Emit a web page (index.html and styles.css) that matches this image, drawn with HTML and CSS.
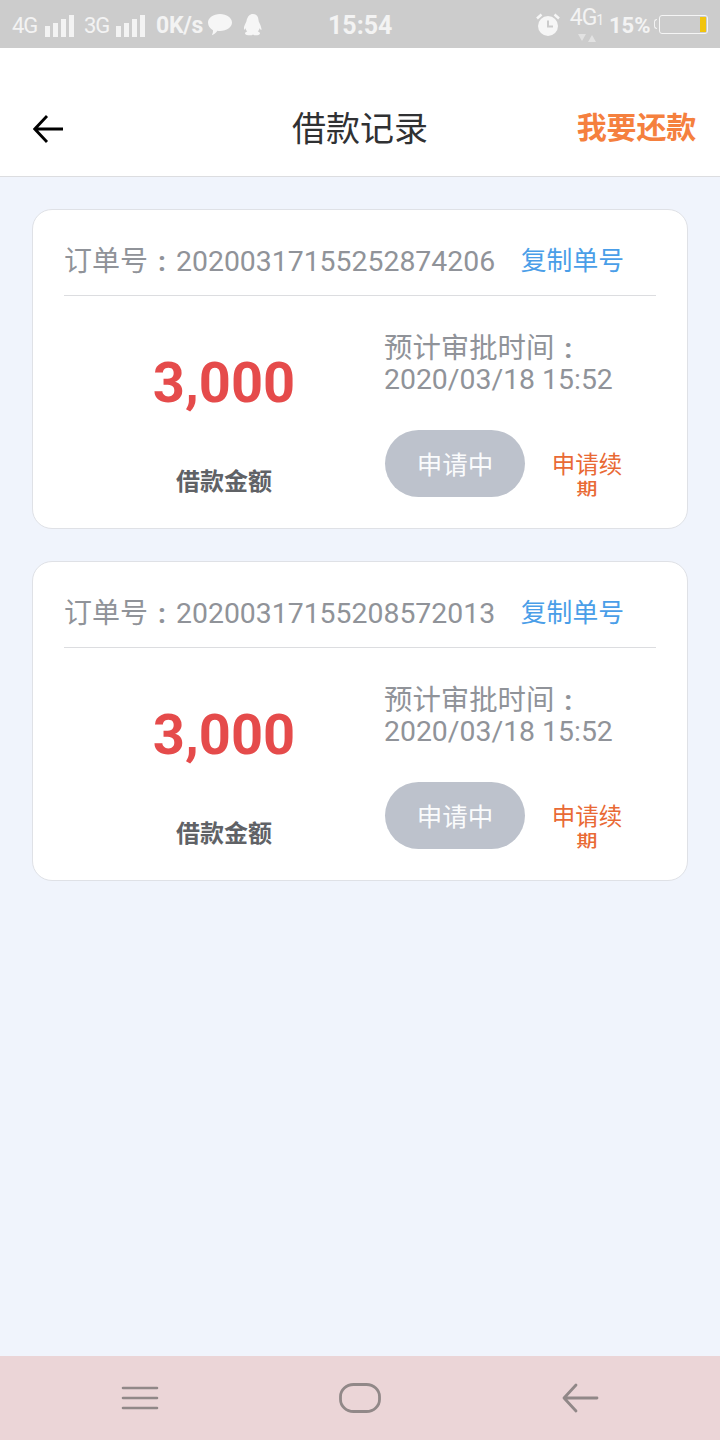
FILE: index.html
```html
<!DOCTYPE html>
<html lang="zh">
<head>
<meta charset="utf-8">
<title>借款记录</title>
<link rel="stylesheet" href="styles.css">
</head>
<body>
<div class="page">
  <div class="status">
    <div class="status-left">
      <span class="net">4G</span>
      <svg class="bars" width="29" height="22" viewBox="0 0 29 22"><path d="M0 11h5v11H0zM8 8h5v14H8zM16 4h5v18h-5zM24 0h5v22h-5z" fill="#f3f3f3"/></svg>
      <span class="net net-b">3G</span>
      <svg class="bars" width="29" height="22" viewBox="0 0 29 22"><path d="M0 11h5v11H0zM8 8h5v14H8zM16 4h5v18h-5zM24 0h5v22h-5z" fill="#f3f3f3"/></svg>
      <span class="speed">0K/s</span>
      <svg class="bubble" width="24" height="22" viewBox="0 0 24 22"><path d="M12 0c6.600 0 12 3.700 12 8.500S18.600 17 12 17c-.9 0-1.800-.1-2.600-.2C8 18.800 6 20.300 3.800 21.300c.9-1.700 1.300-3.300 1.200-5.100C2 14.700 0 11.800 0 8.500 0 3.700 5.400 0 12 0z" fill="#f6f6f6"/></svg>
      <svg class="qq" width="18" height="22" viewBox="0 0 18 22"><path d="M9 0c3.500 0 5.300 2.600 5.500 6 0 1 .3 1.700.8 2.700.9 1.700 1.800 3.700 2.200 6.300.1 1-.5 1.300-1 .6l-1-1.400c-.2 1.300-.8 2.400-1.700 3.300 1.100.4 2.200 1 2.200 2 0 1.300-2.400 1.800-4.300 1.800-1.100 0-2-.3-2.700-.9-.7.6-1.600.9-2.700.9C3.400 21.300 1 20.800 1 19.500c0-1 1.100-1.600 2.200-2C2.300 16.600 1.700 15.500 1.500 14.200l-1 1.400c-.5.700-1.100.4-1-.6C0 12.400.9 10.400 1.800 8.700c.5-1 .9-1.700.9-2.700C3.700 2.600 5.500 0 9 0z" fill="#f6f6f6"/></svg>
      <span class="clock">15:54</span>
    </div>
    <div class="status-right">
      <svg class="alarm" width="24" height="24" viewBox="0 0 24 24"><circle cx="12" cy="13" r="10" fill="#f6f6f6"/><path d="M12 7.500V13.500H17" fill="none" stroke="#cccccc" stroke-width="2"/><path d="M1 5.500 5.500 1.500M23 5.500 18.500 1.500" stroke="#f6f6f6" stroke-width="2.500" fill="none"/></svg>
      <div class="net-stack">
        <span class="net-main">4G<small class="net-sub">1</small></span>
        <svg class="arrows" width="18" height="8" viewBox="0 0 18 8"><path d="M0 0h8L4 7zM10 8l4-7 4 7z" fill="#e2e2e2"/></svg>
      </div>
      <span class="pct">15%</span>
      <span class="batt-cap"></span>
      <div class="battery"><span class="batt-level"></span></div>
    </div>
  </div>

  <header class="topbar">
    <svg class="back" width="30" height="30" viewBox="0 0 30 30"><path d="M14 2 1.800 15 14 28M2 15h28" fill="none" stroke="#000" stroke-width="2.800"/></svg>
    <h1 class="title">借款记录</h1>
    <a class="repay">我要还款</a>
  </header>

  <main class="list">
    <section class="card">
      <div class="card-head">
        <span class="order"><span class="label">订单号<span class="colon">:</span></span>20200317155252874206</span>
        <a class="copy">复制单号</a>
      </div>
      <div class="card-body">
        <div class="amount-col">
          <div class="amount">3,000</div>
          <div class="amount-label">借款金额</div>
        </div>
        <div class="info-col">
          <div class="eta">预计审批时间<span class="colon">:</span><br>2020/03/18 15:52</div>
          <div class="actions">
            <span class="pill">申请中</span>
            <a class="renew"><span class="renew-a">申请续</span><span class="renew-b">期</span></a>
          </div>
        </div>
      </div>
    </section>
    <section class="card">
      <div class="card-head">
        <span class="order"><span class="label">订单号<span class="colon">:</span></span>20200317155208572013</span>
        <a class="copy">复制单号</a>
      </div>
      <div class="card-body">
        <div class="amount-col">
          <div class="amount">3,000</div>
          <div class="amount-label">借款金额</div>
        </div>
        <div class="info-col">
          <div class="eta">预计审批时间<span class="colon">:</span><br>2020/03/18 15:52</div>
          <div class="actions">
            <span class="pill">申请中</span>
            <a class="renew"><span class="renew-a">申请续</span><span class="renew-b">期</span></a>
          </div>
        </div>
      </div>
    </section>
  </main>

  <nav class="navbar">
    <svg width="40" height="30" viewBox="0 0 40 30"><path d="M3 5h34M3 15h34M3 25h34" stroke="#918888" stroke-width="2.600" stroke-linecap="round" fill="none"/></svg>
    <svg width="44" height="32" viewBox="0 0 44 32"><rect x="2.500" y="2.500" width="39" height="27" rx="13" ry="12" fill="none" stroke="#918888" stroke-width="2.800"/></svg>
    <svg width="40" height="32" viewBox="0 0 40 32"><path d="M16 3 4 16l12 13M4 16h33" stroke="#918888" stroke-width="2.800" stroke-linecap="round" stroke-linejoin="round" fill="none"/></svg>
  </nav>
</div>
</body>
</html>
```
FILE: styles.css
```css
* { box-sizing: border-box; }
html, body { margin: 0; padding: 0; }
body {
  font-family: Roboto, "Noto Sans CJK SC", sans-serif;
  background: #f0f4fc;
}
.page {
  width: 720px;
  height: 1440px;
  display: flex;
  flex-direction: column;
  overflow: hidden;
}

/* status bar */
.status {
  height: 48px;
  background: #cccccc;
  color: #f3f3f3;
  display: flex;
  align-items: center;
  justify-content: space-between;
  padding: 2px 12px 0;
  flex: none;
}
.status-left, .status-right { display: flex; align-items: center; }
.net { font-size: 22px; letter-spacing: -1px; width: 33px; font-weight: 400; }
.net-b { margin-left: 10px; width: 32px; }
.bars { margin-top: 1px; }
.speed { font-size: 23px; font-weight: 700; margin-left: 11px; width: 52px; letter-spacing: -.3px; }
.qq { margin-left: 12px; }
.clock { font-size: 25px; font-weight: 700; margin-left: 66px; color: #f3f3f3; }
.alarm { margin-right: 10px; margin-left: 2px; }
.net-stack { display: flex; flex-direction: column; align-items: center; width: 34px; height: 38px; margin-right: 5px; margin-top: -3px; }
.net-main { font-size: 23px; line-height: 26px; font-weight: 400; letter-spacing: -1px; white-space: nowrap; }
.net-sub { font-size: 14px; letter-spacing: 0; }
.arrows { margin-top: 1px; }
.pct { font-size: 22px; font-weight: 700; width: 44px; }
.batt-cap { width: 3px; height: 10px; border: 1px solid #f3f3f3; border-right: 0; border-radius: 3px 0 0 3px; margin-left: 1px; margin-top: -2px; }
.battery {
  width: 49px;
  height: 19px;
  margin-left: 2px;
  margin-top: -2px;
  border: 1px solid #f5f5f5;
  border-radius: 3px;
  display: flex;
  justify-content: flex-end;
  padding: 1px;
}
.batt-level { width: 6px; background: #f2c40e; }

/* title bar */
.topbar {
  height: 129px;
  flex: none;
  background: #fff;
  border-bottom: 1px solid #dcdde0;
  display: flex;
  align-items: center;
  justify-content: space-between;
  position: relative;
  padding: 32px 24px 0 33px;
}
.title {
  margin: 0;
  font-size: 34px;
  font-weight: 400;
  color: #303133;
  line-height: 48px;
  position: absolute;
  left: 0;
  right: 0;
  top: 57px;
  text-align: center;
}
.back { display: block; margin-top: 1px; }
.repay { font-size: 30px; font-weight: 700; color: #f5803e; line-height: 44px; letter-spacing: -.2px; }

/* cards */
.list {
  flex: 1;
  padding: 32px 32px 0;
  display: flex;
  flex-direction: column;
  gap: 32px;
}
.card {
  height: 320px;
  background: #fff;
  border: 1px solid #dfe1e6;
  border-radius: 20px;
  padding: 0 31px;
  flex: none;
}
.card-head {
  height: 86px;
  display: flex;
  align-items: center;
  justify-content: space-between;
  border-bottom: 1px solid #dcdde0;
  padding: 32px 32px 16px 0;
}
.order { font-size: 28.400px; color: #909399; line-height: 40px; white-space: nowrap; margin-top: 2px; }
.label { font-size: 28px; }
.colon {
  display: inline-block;
  width: 28px;
  text-align: center;
  line-height: 1;
  font-weight: 700;
}
.copy { font-size: 25.800px; color: #4a9ee8; line-height: 38px; white-space: nowrap; }
.card-body { display: flex; }
.amount-col {
  width: 320px;
  display: flex;
  flex-direction: column;
  align-items: center;
  flex: none;
}
.amount {
  font-size: 56px;
  font-weight: 700;
  color: #e54b4b;
  line-height: 66px;
  margin-top: 54px;
}
.amount-label {
  font-size: 24px;
  font-weight: 700;
  color: #606266;
  line-height: 34px;
  margin-top: 49px;
}
.info-col { padding-left: 1px; }
.eta {
  font-size: 28.400px;
  line-height: 31px;
  color: #909399;
  margin: 37px 0 0 -1px;
  white-space: nowrap;
}
.actions { display: flex; align-items: flex-start; margin-top: 35px; }
.pill {
  width: 140px;
  height: 67px;
  border-radius: 34px;
  background: #bdc2cc;
  color: #fafbfc;
  font-size: 25.500px;
  display: flex;
  align-items: center;
  justify-content: center;
  padding-bottom: 2px;
}
.renew {
  width: 70px;
  margin-left: 27px;
  color: #e96a35;
  display: flex;
  flex-direction: column;
  align-items: center;
  margin-top: 20px;
}
.renew-a { font-size: 23.500px; font-weight: 400; line-height: 30px; white-space: nowrap; }
.renew-b { font-size: 21px; font-weight: 500; line-height: 21px; display: block; transform: scaleY(.8); margin-top: -1px; }

/* nav bar */
.navbar {
  height: 84px;
  flex: none;
  background: #ebd5d7;
  display: flex;
  align-items: center;
  justify-content: space-between;
  padding: 0 120px;
}
```
